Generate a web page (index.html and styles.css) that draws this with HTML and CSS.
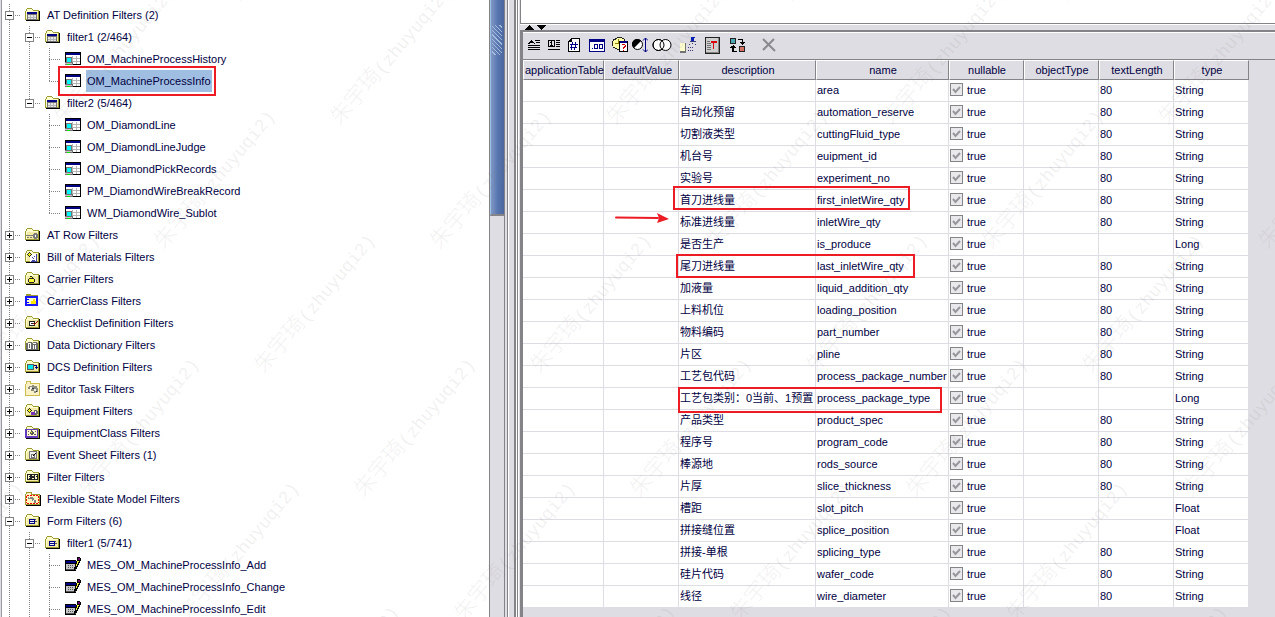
FILE: index.html
```html
<!DOCTYPE html>
<html lang="zh-CN">
<head>
<meta charset="utf-8">
<title>AT Definition Filters</title>
<link rel="stylesheet" href="styles.css">
</head>
<body>
<svg class="defs" aria-hidden="true">
  <defs>
    <symbol id="folder" viewBox="0 0 16 16">
      <path d="M1 14h14V4h-1v9H1z" fill="#000"/>
      <path d="M0 4h1V2h1V1h5v1h1v1h6v10H0z" fill="#9c9a31"/>
      <path d="M1 4h1V2h5v1h1v1h5v8H1z" fill="#ffffce"/>
      <path d="M2 5h11v7H2z" fill="#f3eba5"/>
    </symbol>
    <symbol id="f-table" viewBox="0 0 16 16"><use href="#folder"/><path d="M2 5h10v8H2z" fill="#737373"/><path d="M3 8h8v4H3z" fill="#e7e7e7"/><path d="M2 5h10v2H2z" fill="#000084"/><path d="M5 8h1v4H5zM8 8h1v4H8zM3 10h8v1H3z" fill="#b5b5b5"/></symbol>
    <symbol id="f-row" viewBox="0 0 16 16"><use href="#folder"/><path d="M1 8h8v1H1zM2 10h2v1H2zM5 10h2v1H5zM9 6h3v1h1v4h-1v1H9v-1H8V7h1z" fill="#7b7b7b"/><path d="M10 8h1v2h-1z" fill="#fff"/></symbol>
    <symbol id="f-bom" viewBox="0 0 16 16"><use href="#folder"/><path d="M5 5h7v8H5z" fill="#fff"/><path d="M11 5h1v8H6v-1h5zM7 8h1v1H7zM8 9h1v1H8zM7 11h3v1H7zM9 7h1v1H9z" fill="#4242a5"/><path d="M4 3h1v1h1v1h1v1H6v1H5v1H4V7H3V6H2V5h1V4h1z" fill="#222"/><path d="M4 4h1v3H4zM3 5h3v1H3z" fill="#ffff00"/></symbol>
    <symbol id="f-carrier" viewBox="0 0 16 16"><use href="#folder"/><path d="M5 5h2v1h1v1h1v1h1v3H9v1H4v-1H3V8h1V7h1z" fill="#222"/><path d="M5 6h2v1H5zM4 8h5v3H4z" fill="#ffff31"/></symbol>
    <symbol id="f-cclass" viewBox="0 0 16 16"><path d="M0 3h1V1h5v1h7v2H0z" fill="#9c9a31"/><path d="M0 3h13v10H0z" fill="#1818ff"/><path d="M2 5h9v6H2z" fill="#ffffce"/><path d="M2 6h2v1H2zM2 9h2v1H2z" fill="#0000ff"/><path d="M7 8h1V6h2v2h1v3H6V8z" fill="#ffe700"/></symbol>
    <symbol id="f-check" viewBox="0 0 16 16"><use href="#folder"/><path d="M4 6h6v5H4z" fill="#222"/><path d="M5 7h4v3H5z" fill="#fff"/><path d="M6 8h2v1H6z" fill="#222"/><path d="M8 8h1v1h1V8h1V7h1V6h1v1h-1v1h-1v1h-1v1H9V9H8z" fill="#a50000"/></symbol>
    <symbol id="f-dict" viewBox="0 0 16 16"><use href="#folder"/><path d="M1 6h2V5h4v1h1V5h4v1h1v7H1z" fill="#6b6b6b"/><path d="M3 6h3v6H3zM8 6h3v6H8z" fill="#fff"/><path d="M4 7h1v4H4zM8 7h3v1H8zM9 8h1v4H9z" fill="#6b6b6b"/></symbol>
    <symbol id="f-dcs" viewBox="0 0 16 16"><use href="#folder"/><path d="M2 5h7v6H2z" fill="#5a5a5a"/><path d="M3 6h5v4H3z" fill="#00e7ef"/><path d="M9 6h3v2h1v1h-1v1h-1V9h-1V8h1V7H9z" fill="#000084"/></symbol>
    <symbol id="f-task" viewBox="0 0 16 16"><path d="M0 3h1V0h5v2h9v13H0z" fill="#cebd4a"/><path d="M1 3h1V1h3v2h9v11H1z" fill="#fbf1c6"/><path d="M4 5h3V4h2v1h3v2h1v4h-2v1H9v-2H6V8H3V6h1z" fill="#8c8c7c"/><path d="M5 6h2v2H5zM9 8h2v2H9z" fill="#efefef"/><path d="M7 7h2v1H7zM11 10h1v1h-1z" fill="#393939"/></symbol>
    <symbol id="f-equip" viewBox="0 0 16 16"><use href="#folder"/><path d="M4 5h1v1h1v1h1v1H6v1H5v1H4V9H3V8H2V7h1V6h1z" fill="#222"/><path d="M4 6h1v3H4zM3 7h3v1H3z" fill="#ffff00"/><path d="M6 9h4v3H6z" fill="#7b31bd"/><path d="M9 7h3v1h1v3h-1v1h-2V9H9z" fill="#6b6b6b"/><path d="M10 8h1v2h-1z" fill="#fff"/></symbol>
    <symbol id="f-eclass" viewBox="0 0 16 16"><use href="#folder"/><path d="M0 4h13v9H0z" fill="#6339bd"/><path d="M2 5h10v6H2z" fill="#fff7ce"/><path d="M3 6h1v1H3zM3 9h1v1H3zM10 6h1v1h-1zM6 5h1v1h1v1h1v2H8v1H6V9H5V7h1zM9 9h2v1H9z" fill="#5a5a5a"/><path d="M6 7h1v1H6z" fill="#ffff00"/></symbol>
    <symbol id="f-event" viewBox="0 0 16 16"><use href="#folder"/><path d="M4 4h8v8H4z" fill="#737373"/><path d="M5 5h6v6H5z" fill="#efefef"/><path d="M6 7h4v4H6z" fill="#737373"/><path d="M7 8h2v2H7z" fill="#fff"/><path d="M8 8h1V7h1V6h1v1h-1v1H9v1H8z" fill="#000"/></symbol>
    <symbol id="f-filter" viewBox="0 0 16 16"><use href="#folder"/><path d="M2 5h11v6H2z" fill="#222"/><path d="M3 6h2v1H4v1h1v1H4v1H3zM7 6h2v1H7zM7 9h2v1H7zM10 6h2v1h-1v1h1v2h-2z" fill="#f7f7ce"/></symbol>
    <symbol id="f-state" viewBox="0 0 16 16"><path d="M1 15h15V4h-1v10H1z" fill="#000"/><path d="M0 3h1V1h6v2h8v11H0z" fill="#9c9a31"/><path d="M1 3h1V2h4v2h8v9H1z" fill="#fff7bd"/><path d="M2 4h2v1H2zM5 4h2v1H5zM8 4h2v1H8zM11 4h2v1h-2zM2 12h2v1H2zM5 12h2v1H5zM8 12h2v1H8zM11 12h2v1h-2zM1 5h1v2H1zM1 8h1v2H1zM1 11h1v1H1zM13 5h1v2h-1zM13 8h1v2h-1zM13 11h1v1h-1z" fill="#ff0000"/><path d="M3 6h5v1h1v2h2v3h-2v-2H7V8H3z" fill="#848484"/><path d="M4 6h1v1H4zM8 9h1v1H8z" fill="#fff"/></symbol>
    <symbol id="f-form" viewBox="0 0 16 16"><use href="#folder"/><path d="M4 6h6v5H4z" fill="#000084"/><path d="M5 7h4v1H5zM5 9h4v1H5z" fill="#efefef"/><path d="M10 8h2v1h-2zM10 6h1v1h-1z" fill="#555"/></symbol>
    <symbol id="at-table" viewBox="0 0 16 16"><path d="M0 1h16v13H0z" fill="#000"/><path d="M1 4h14v9H1z" fill="#fff"/><path d="M1 2h14v2H1z" fill="#000084"/><path d="M7 5h1v8H7zM11 5h1v8h-1zM2 7h13v1H2zM2 10h13v1H2z" fill="#b5b5b5"/><path d="M1 6h6v5h1v3H0v-3h1z" fill="#737373"/><path d="M2 7h4v4H2z" fill="#00f7ff"/><path d="M0 12h7v1H0z" fill="#c6c6c6"/><path d="M2 13h3v1H2z" fill="#00e700"/></symbol>
    <symbol id="form-edit" viewBox="0 0 16 16"><path d="M0 3h11v11H0z" fill="#000"/><path d="M1 4h10v2H1z" fill="#000084"/><path d="M1 7h10v6H1z" fill="#c6c6c6"/><path d="M3 8h1v1H3zM5 8h1v1H5zM7 8h1v1H7zM3 10h1v1H3zM5 10h1v1H5zM7 10h1v1H7zM1 12h10v1H1z" fill="#555"/><path d="M12 0h3v1h1v3h-1v2h-1v2h-1v2h-1v2h-2v1H9v-3h1V7h1V4h1z" fill="#000"/><path d="M12 4h2v1h-1v2h-1v2h-1V7h1z" fill="#ffff42"/><path d="M13 1h2v2h-2z" fill="#6b006b"/></symbol>
  </defs>
</svg>

<div class="app">
  <nav class="tree-pane" aria-label="Filters">
    <ul class="tree">
      <li><div class="row"><button class="toggle" aria-label="Collapse"></button><svg class="ico"><use href="#f-table"/></svg><span class="label">AT Definition Filters (2)</span></div>
        <ul>
          <li><div class="row"><button class="toggle" aria-label="Collapse"></button><svg class="ico"><use href="#f-table"/></svg><span class="label">filter1 (2/464)</span></div>
            <ul>
              <li><div class="row leaf"><svg class="ico"><use href="#at-table"/></svg><span class="label">OM_MachineProcessHistory</span></div></li>
              <li><div class="row leaf marked"><svg class="ico"><use href="#at-table"/></svg><span class="label selected">OM_MachineProcessInfo</span></div></li>
            </ul>
          </li>
          <li><div class="row"><button class="toggle" aria-label="Collapse"></button><svg class="ico"><use href="#f-table"/></svg><span class="label">filter2 (5/464)</span></div>
            <ul>
              <li><div class="row leaf"><svg class="ico"><use href="#at-table"/></svg><span class="label">OM_DiamondLine</span></div></li>
              <li><div class="row leaf"><svg class="ico"><use href="#at-table"/></svg><span class="label">OM_DiamondLineJudge</span></div></li>
              <li><div class="row leaf"><svg class="ico"><use href="#at-table"/></svg><span class="label">OM_DiamondPickRecords</span></div></li>
              <li><div class="row leaf"><svg class="ico"><use href="#at-table"/></svg><span class="label">PM_DiamondWireBreakRecord</span></div></li>
              <li><div class="row leaf"><svg class="ico"><use href="#at-table"/></svg><span class="label">WM_DiamondWire_Sublot</span></div></li>
            </ul>
          </li>
        </ul>
      </li>
      <li><div class="row"><button class="toggle closed" aria-label="Expand"></button><svg class="ico"><use href="#f-row"/></svg><span class="label">AT Row Filters</span></div></li>
      <li><div class="row"><button class="toggle closed" aria-label="Expand"></button><svg class="ico"><use href="#f-bom"/></svg><span class="label">Bill of Materials Filters</span></div></li>
      <li><div class="row"><button class="toggle closed" aria-label="Expand"></button><svg class="ico"><use href="#f-carrier"/></svg><span class="label">Carrier Filters</span></div></li>
      <li><div class="row"><button class="toggle closed" aria-label="Expand"></button><svg class="ico"><use href="#f-cclass"/></svg><span class="label">CarrierClass Filters</span></div></li>
      <li><div class="row"><button class="toggle closed" aria-label="Expand"></button><svg class="ico"><use href="#f-check"/></svg><span class="label">Checklist Definition Filters</span></div></li>
      <li><div class="row"><button class="toggle closed" aria-label="Expand"></button><svg class="ico"><use href="#f-dict"/></svg><span class="label">Data Dictionary Filters</span></div></li>
      <li><div class="row"><button class="toggle closed" aria-label="Expand"></button><svg class="ico"><use href="#f-dcs"/></svg><span class="label">DCS Definition Filters</span></div></li>
      <li><div class="row"><button class="toggle closed" aria-label="Expand"></button><svg class="ico"><use href="#f-task"/></svg><span class="label">Editor Task Filters</span></div></li>
      <li><div class="row"><button class="toggle closed" aria-label="Expand"></button><svg class="ico"><use href="#f-equip"/></svg><span class="label">Equipment Filters</span></div></li>
      <li><div class="row"><button class="toggle closed" aria-label="Expand"></button><svg class="ico"><use href="#f-eclass"/></svg><span class="label">EquipmentClass Filters</span></div></li>
      <li><div class="row"><button class="toggle closed" aria-label="Expand"></button><svg class="ico"><use href="#f-event"/></svg><span class="label">Event Sheet Filters (1)</span></div></li>
      <li><div class="row"><button class="toggle closed" aria-label="Expand"></button><svg class="ico"><use href="#f-filter"/></svg><span class="label">Filter Filters</span></div></li>
      <li><div class="row"><button class="toggle closed" aria-label="Expand"></button><svg class="ico"><use href="#f-state"/></svg><span class="label">Flexible State Model Filters</span></div></li>
      <li class="more"><div class="row"><button class="toggle" aria-label="Collapse"></button><svg class="ico"><use href="#f-form"/></svg><span class="label">Form Filters (6)</span></div>
        <ul>
          <li class="more"><div class="row"><button class="toggle" aria-label="Collapse"></button><svg class="ico"><use href="#f-form"/></svg><span class="label">filter1 (5/741)</span></div>
            <ul>
              <li><div class="row leaf"><svg class="ico"><use href="#form-edit"/></svg><span class="label">MES_OM_MachineProcessInfo_Add</span></div></li>
              <li><div class="row leaf"><svg class="ico"><use href="#form-edit"/></svg><span class="label">MES_OM_MachineProcessInfo_Change</span></div></li>
              <li class="more"><div class="row leaf"><svg class="ico"><use href="#form-edit"/></svg><span class="label">MES_OM_MachineProcessInfo_Edit</span></div></li>
            </ul>
          </li>
        </ul>
      </li>
    </ul>
  </nav>
  <div class="scrollbar"><div class="thumb"><div class="grip"></div></div></div>
  <div class="divider"></div>

  <main class="detail">
    <div class="upper"></div>
    <div class="split">
      <button class="arrow" aria-label="Maximize lower"><svg width="10" height="5"><path d="M5 0L10 5H0z"/></svg></button>
      <button class="arrow" aria-label="Maximize upper"><svg width="10" height="5"><path d="M0 0H10L5 5z"/></svg></button>
    </div>
    <div class="lower">
      <div class="toolbar" role="toolbar" aria-label="Columns">
        <button aria-label="Text"><svg width="14" height="16"><path d="M4 3h1v1h1v1h1v1h1v1H7V6H3v1H1V6h1V5h1V4h1zM8 3h5v1H8zM9 5h4v1H9zM1 8h12v1H1zM1 10h12v1H1zM1 12h12v1H1z"/></svg></button>
        <button aria-label="Number"><svg width="14" height="16"><path d="M1 3h7v7H1zM2 4v5h5V4z" fill-rule="evenodd"/><path d="M4 4h1v4h1v1H3V8h1V6H3V5h1zM9 3h4v1H9zM9 5h4v1H9zM9 7h4v1H9zM9 9h4v1H9zM1 12h12v1H1z"/></svg></button>
        <button aria-label="Sequence"><svg width="14" height="16"><path d="M4 1h9v14H1V4h1V3h1V2h1z"/><path d="M5 2h7v12H2V5h3z" fill="#fff"/><path d="M5 5h1v2h2V5h1v2h2v1H9v2h1v1H8v2H7v-2H5v2H4v-2H3v-1h1V8H3V7h2zM5 8v2h3V8z" fill="#000084" fill-rule="evenodd"/></svg></button>
        <button class="w26" aria-label="Decimal"><svg width="16" height="16"><path d="M0 2h16v13H0z" fill="#000084"/><path d="M1 5h14v9H1z" fill="#fff"/><path d="M3 11h1v1H3zM5 7h4v5H5zM6 8v3h2V8zM10 7h4v5h-4zM11 8v3h2V8z" fill="#000084" fill-rule="evenodd"/></svg></button>
        <button aria-label="Date and time"><svg width="16" height="16"><path d="M5 0h5v1h2v1h1v2h1v6h-1v2h-2v1H5v-1H3v-1H1V9H0V4h1V2h2V1h2z" fill="#222"/><path d="M5 1h5v1h2v2h1v6h-2v2H5v-1H3v-1H1V4h1V3h2V2h1z" fill="#ffffa5"/><path d="M6 2h1v5H6zM3 6h4v1H3z" fill="#848400"/><path d="M7 4h9v11H7z" fill="#000"/><path d="M8 6h7v8H8z" fill="#fff"/><path d="M8 4h7v2H8z" fill="#000084"/><path d="M10 7h3v1h1v2h-1v1h-1v1h-1v-2h1V9h1V8h-3zM11 13h1v1h-1z" fill="#c60000"/></svg></button>
        <button aria-label="Contrast"><svg width="16" height="16" class="smooth"><circle cx="5.500" cy="7.500" r="5" fill="#fff" stroke="#000"/><path d="M9 4A5 5 0 1 0 2 11z"/><path d="M13.500 1v14M11 3.500l2.500-2.500 2.500 2.500M11 12.500l2.500 2.500 2.500-2.500" fill="none" stroke="#000084"/></svg></button>
        <button class="w24" aria-label="Join"><svg width="20" height="16" class="smooth"><circle cx="6.500" cy="8" r="5.500" fill="#fff" stroke="#000"/><circle cx="13.500" cy="8" r="5.500" fill="#fff" stroke="#000"/><circle cx="6.500" cy="8" r="5.500" fill="none" stroke="#000"/></svg></button>
        <button class="w28" aria-label="Insert column"><svg width="16" height="16"><path d="M0 6h6v10H0z" fill="#737373"/><path d="M0 6h5v8H0z" fill="#ffffce"/><path d="M11 0h4v1h-1v3h2v1h-6V4h1z" fill="#0821b5"/><path d="M10 4h6v1h-6z" fill="#393973"/><path d="M9 7h1v1H9zM12 6h1v1h-1zM15 7h1v1h-1zM8 10h1v1H8zM10 10h1v1h-1zM12 10h1v1h-1zM8 13h1v1H8zM10 13h1v1h-1zM12 13h1v1h-1z" fill="#393973"/></svg></button>
        <button aria-label="Pin column"><svg width="15" height="17"><path d="M0 0h15v17H0z" fill="#222"/><path d="M1 1h13v15H1z" fill="#848484"/><path d="M1 1h12v14H1z" fill="#cecece"/><path d="M2 4h3v1H2zM2 6h4v1H2zM2 8h4v1H2zM2 10h4v1H2zM2 12h4v1H2z" fill="#737373"/><path d="M6 4h6v2H9v6H8V6H6z" fill="#d60008"/></svg></button>
        <button class="w30" aria-label="Swap"><svg width="15" height="16"><path d="M0 1h6v6H0zM9 9h6v6H9z" fill="#222"/><path d="M1 2h4v4H1z" fill="#4aa5b5"/><path d="M10 10h4v4h-4z" fill="#d67363"/><path d="M8 2h5v3h2v1h-1v1h-1v1h-1V7h-1V6h-1V5h2V3H8zM3 8h1v1h1v1h1v1H4v3h3v1H2v-4H0v-1h1V9h2z"/></svg></button>
        <button class="w34" aria-label="Delete" disabled><svg width="14" height="14" class="smooth"><path d="M1 1L13 13M12 1L1 12" fill="none" stroke="#8a8a8e" stroke-width="2"/></svg></button>
      </div>
      <div class="grid">
        <table>
          <colgroup><col class="c-app"><col class="c-std"><col class="c-desc"><col class="c-name"><col class="c-std"><col class="c-std"><col class="c-std"><col class="c-std"></colgroup>
          <thead><tr><th>applicationTable</th><th>defaultValue</th><th>description</th><th>name</th><th>nullable</th><th>objectType</th><th>textLength</th><th>type</th></tr></thead>
          <tbody>
            <tr><td></td><td></td><td>车间</td><td>area</td><td><label><input type="checkbox" checked disabled>true</label></td><td></td><td>80</td><td>String</td></tr>
            <tr><td></td><td></td><td>自动化预留</td><td>automation_reserve</td><td><label><input type="checkbox" checked disabled>true</label></td><td></td><td>80</td><td>String</td></tr>
            <tr><td></td><td></td><td>切割液类型</td><td>cuttingFluid_type</td><td><label><input type="checkbox" checked disabled>true</label></td><td></td><td>80</td><td>String</td></tr>
            <tr><td></td><td></td><td>机台号</td><td>euipment_id</td><td><label><input type="checkbox" checked disabled>true</label></td><td></td><td>80</td><td>String</td></tr>
            <tr><td></td><td></td><td>实验号</td><td>experiment_no</td><td><label><input type="checkbox" checked disabled>true</label></td><td></td><td>80</td><td>String</td></tr>
            <tr><td></td><td></td><td class="note note-first">首刀进线量</td><td>first_inletWire_qty</td><td><label><input type="checkbox" checked disabled>true</label></td><td></td><td>80</td><td>String</td></tr>
            <tr><td></td><td></td><td class="pointed">标准进线量<svg class="pointer" width="54" height="12"><path d="M1 5.500L43 6" stroke="#ed1c24" stroke-width="2" stroke-linecap="round"/><path d="M42 1L54 7L42 11L44 6z" fill="#ed1c24"/></svg></td><td>inletWire_qty</td><td><label><input type="checkbox" checked disabled>true</label></td><td></td><td>80</td><td>String</td></tr>
            <tr><td></td><td></td><td>是否生产</td><td>is_produce</td><td><label><input type="checkbox" checked disabled>true</label></td><td></td><td></td><td>Long</td></tr>
            <tr><td></td><td></td><td class="note note-last">尾刀进线量</td><td>last_inletWire_qty</td><td><label><input type="checkbox" checked disabled>true</label></td><td></td><td>80</td><td>String</td></tr>
            <tr><td></td><td></td><td>加液量</td><td>liquid_addition_qty</td><td><label><input type="checkbox" checked disabled>true</label></td><td></td><td>80</td><td>String</td></tr>
            <tr><td></td><td></td><td>上料机位</td><td>loading_position</td><td><label><input type="checkbox" checked disabled>true</label></td><td></td><td>80</td><td>String</td></tr>
            <tr><td></td><td></td><td>物料编码</td><td>part_number</td><td><label><input type="checkbox" checked disabled>true</label></td><td></td><td>80</td><td>String</td></tr>
            <tr><td></td><td></td><td>片区</td><td>pline</td><td><label><input type="checkbox" checked disabled>true</label></td><td></td><td>80</td><td>String</td></tr>
            <tr><td></td><td></td><td>工艺包代码</td><td>process_package_number</td><td><label><input type="checkbox" checked disabled>true</label></td><td></td><td>80</td><td>String</td></tr>
            <tr><td></td><td></td><td class="note note-type">工艺包类别：0当前、1预置</td><td>process_package_type</td><td><label><input type="checkbox" checked disabled>true</label></td><td></td><td></td><td>Long</td></tr>
            <tr><td></td><td></td><td>产品类型</td><td>product_spec</td><td><label><input type="checkbox" checked disabled>true</label></td><td></td><td>80</td><td>String</td></tr>
            <tr><td></td><td></td><td>程序号</td><td>program_code</td><td><label><input type="checkbox" checked disabled>true</label></td><td></td><td>80</td><td>String</td></tr>
            <tr><td></td><td></td><td>棒源地</td><td>rods_source</td><td><label><input type="checkbox" checked disabled>true</label></td><td></td><td>80</td><td>String</td></tr>
            <tr><td></td><td></td><td>片厚</td><td>slice_thickness</td><td><label><input type="checkbox" checked disabled>true</label></td><td></td><td>80</td><td>String</td></tr>
            <tr><td></td><td></td><td>槽距</td><td>slot_pitch</td><td><label><input type="checkbox" checked disabled>true</label></td><td></td><td></td><td>Float</td></tr>
            <tr><td></td><td></td><td>拼接缝位置</td><td>splice_position</td><td><label><input type="checkbox" checked disabled>true</label></td><td></td><td></td><td>Float</td></tr>
            <tr><td></td><td></td><td>拼接-单根</td><td>splicing_type</td><td><label><input type="checkbox" checked disabled>true</label></td><td></td><td>80</td><td>String</td></tr>
            <tr><td></td><td></td><td>硅片代码</td><td>wafer_code</td><td><label><input type="checkbox" checked disabled>true</label></td><td></td><td>80</td><td>String</td></tr>
            <tr><td></td><td></td><td>线径</td><td>wire_diameter</td><td><label><input type="checkbox" checked disabled>true</label></td><td></td><td>80</td><td>String</td></tr>
          </tbody>
        </table>
      </div>
    </div>
  </main>
</div>

<svg class="watermark" aria-hidden="true">
  <defs>
    <text id="wm" transform="rotate(-50)">朱宇琦<tspan class="wm-latin">(zhuyuqi2)</tspan></text>
    <g id="wm-row"><use href="#wm" x="0"/><use href="#wm" x="276"/><use href="#wm" x="552"/><use href="#wm" x="828"/><use href="#wm" x="1104"/><use href="#wm" x="1380"/></g>
  </defs>
  <use href="#wm-row" x="-36" y="2"/>
  <use href="#wm-row" x="-212" y="126"/>
  <use href="#wm-row" x="-112" y="250"/>
  <use href="#wm-row" x="-12" y="374"/>
  <use href="#wm-row" x="-188" y="498"/>
  <use href="#wm-row" x="-88" y="622"/>
  <use href="#wm-row" x="12" y="746"/>
</svg>
</body>
</html>
```
FILE: styles.css
```css
*, *::before, *::after { box-sizing: border-box; }

body {
  margin: 0;
  background: #dedde3;
  color: #000042;
  font: 11px/14px "Liberation Sans", "Noto Sans CJK SC", sans-serif;
  overflow: hidden;
}

button {
  margin: 0;
  padding: 0;
  border: 0;
  background: none;
  font: inherit;
}

svg { shape-rendering: crispEdges; }
.smooth { shape-rendering: auto; }
.defs { position: absolute; width: 0; height: 0; }

.app {
  display: flex;
  height: 100vh;
}

/* Filter tree */
.tree-pane {
  flex: 0 1 489px;
  min-width: 0;
  overflow: hidden;
  padding-top: 4px;
  background: linear-gradient(90deg, #dedde3 1px, #9a999f 1px 2px, #fff 2px);
}

.tree, .tree ul {
  margin: 0;
  padding: 0;
  list-style: none;
}
.tree ul { padding-left: 20px; }

.tree li {
  background: repeating-linear-gradient(#848284 0 1px, transparent 1px 2px) 9px 0 / 1px 100% no-repeat;
}
.tree li:last-child { background-size: 1px 12px; }
.tree li.more { background-size: 1px 100%; }

.row {
  display: flex;
  align-items: center;
  height: 22px;
  padding-left: 5px;
  background: repeating-linear-gradient(90deg, #848284 0 1px, transparent 1px 2px) 9px 11px / 12px 1px no-repeat;
  white-space: nowrap;
}
.row.leaf { padding-left: 25px; }

.toggle {
  width: 9px;
  height: 9px;
  margin-right: 11px;
  border: 1px solid #848284;
  background: linear-gradient(#000, #000) 1px 3px / 5px 1px no-repeat #fff;
}
.toggle.closed {
  background:
    linear-gradient(#000, #000) 1px 3px / 5px 1px no-repeat,
    linear-gradient(#000, #000) 3px 1px / 1px 5px no-repeat,
    #fff;
}

.ico {
  flex: none;
  width: 16px;
  height: 16px;
}

.label {
  margin-left: 5px;
  padding: 4px 1px;
}
.label.selected { background: #a0bee1; }

.marked { position: relative; }
.marked::after {
  content: "";
  position: absolute;
  left: 18px;
  top: -4px;
  width: 158px;
  height: 30px;
  border: 2px solid #ed1c24;
}

/* Scrollbar and divider */
.scrollbar {
  flex: none;
  width: 16px;
  border: solid #848388;
  border-width: 0 1px;
}
.thumb {
  height: 35%;
  border-bottom: 2px solid #848388;
  border-left: 1px solid #9cc0e4;
  background: linear-gradient(90deg, #8098c4, #5876b0 50%, #4c689e);
  padding: 25px 2px 0 1px;
}
.grip {
  height: 30px;
  background: repeating-linear-gradient(45deg, transparent 0 2px, #a4bbdc 2px 3px);
}
.divider {
  flex: none;
  width: 15px;
  background: linear-gradient(90deg, #dedde3 2px, #848388 2px 3px, #fff 3px 4px, #dedde3 4px 9px, #848388 9px 11px, #fff 11px 12px, #848388 12px 13px, #fff 13px 14px, #dedde3 14px);
}

/* Detail pane */
.detail {
  flex: 1;
  min-width: 0;
  display: flex;
  flex-direction: column;
}
.upper {
  flex: none;
  height: 24px;
  border: solid #848388;
  border-width: 0 0 1px 1px;
  background: #fff;
}
.split {
  flex: none;
  display: flex;
  gap: 2px;
  height: 6px;
  padding-left: 4px;
  border-top: 1px solid #fff;
}
.arrow { display: flex; }

.lower {
  flex: 1;
  min-height: 0;
  border: solid #848388;
  border-width: 2px 0 0 3px;
}
.toolbar {
  display: flex;
  align-items: flex-start;
  height: 27px;
  padding-left: 1px;
  border-top: 1px solid #fff;
}
.toolbar button {
  display: flex;
  align-items: center;
  justify-content: center;
  width: 20px;
  height: 24px;
}
.toolbar .w24 { width: 24px; }
.toolbar .w26 { width: 26px; }
.toolbar .w28 { width: 28px; }
.toolbar .w30 { width: 30px; }
.toolbar .w34 { width: 34px; }

.grid { border-top: 1px solid #848388; }

table {
  width: 726px;
  table-layout: fixed;
  border-spacing: 0;
}
.c-app { width: 81px; }
.c-std { width: 75px; }
.c-desc { width: 137px; }
.c-name { width: 133px; }

th {
  height: 20px;
  padding: 0 0 0 1px;
  border: 1px solid #848388;
  border-top-color: #fff;
  border-left-color: #fff;
  font-weight: 400;
  white-space: nowrap;
}
td {
  height: 22px;
  padding: 0 1px 2px;
  border: solid #dedde3;
  border-width: 0 1px 1px 0;
  background: #fff;
  white-space: nowrap;
}

td label {
  display: flex;
  align-items: center;
  gap: 4px;
}
td input {
  appearance: none;
  width: 13px;
  height: 13px;
  margin: 0;
  border: 1px solid #848388;
  background: #e9e9ec url("data:image/svg+xml,%3Csvg xmlns='http://www.w3.org/2000/svg' viewBox='0 0 11 11'%3E%3Cpath d='M2 5l2.500 3L9 3' fill='none' stroke='%2398989c' stroke-width='2'/%3E%3C/svg%3E");
}

/* Red call-outs over the grid */
.note, .pointed { position: relative; }
.note { z-index: 1; }
.note::after {
  content: "";
  position: absolute;
  height: 24px;
  border: 2px solid #ed1c24;
}
.note-first::after { left: -6px; top: -4px; width: 237px; }
.note-last::after { left: -3px; top: -2px; width: 239px; }
.note-type::after { left: -1px; top: -1px; width: 264px; height: 26px; }
.pointer {
  position: absolute;
  left: -64px;
  top: 0;
  shape-rendering: auto;
}

.watermark {
  position: absolute;
  z-index: 2;
  inset: 0;
  width: 100%;
  height: 100%;
  pointer-events: none;
  fill: #808080;
  fill-opacity: 0.12;
  font: 300 22px "Noto Sans CJK SC", sans-serif;
}
.wm-latin { font: 18px "Liberation Mono", monospace; }
```
